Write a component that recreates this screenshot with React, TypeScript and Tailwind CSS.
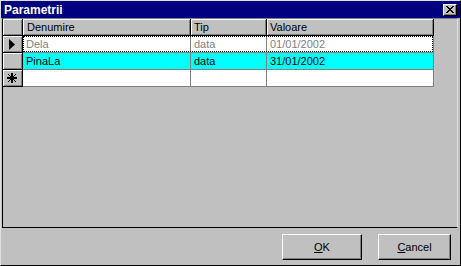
import React from "react";

const fixedCell =
  "bg-[#c0c0c0] border-r border-b border-r-black border-b-black shadow-[inset_1px_1px_#ffffff,inset_-1px_-1px_#808080]";
const dataCell = "border-r border-b border-[#808080] px-[3px] flex items-center whitespace-nowrap overflow-hidden";

function Triangle() {
  return (
    <svg width="6" height="11" viewBox="0 0 6 11">
      <path d="M0 0 L6 5.5 L0 11 Z" fill="#000" />
    </svg>
  );
}

function Star() {
  return (
    <svg width="10" height="10" viewBox="0 0 10 10" shapeRendering="crispEdges">
      <path d="M5 0 V10 M0 5 H10 M1 1 L9 9 M9 1 L1 9" stroke="#000" strokeWidth="1.2" />
    </svg>
  );
}

export default function App() {
  return (
    <div className="w-[461px] h-[266px] bg-[#c0c0c0] border border-t-[#dfdfdf] border-l-[#dfdfdf] border-r-black border-b-black flex flex-col font-['Liberation_Sans',Arial,sans-serif] text-[11px] text-black select-none">
      {/* title bar */}
      <div className="h-[17px] bg-[#000080] flex items-center justify-between pl-[3px] pr-[3px]">
        <span className="text-white font-bold text-[12px] leading-none">Parametrii</span>
        <div className="w-[14px] h-[12px] bg-[#c0c0c0] border border-t-white border-l-white border-r-black border-b-black shadow-[inset_-1px_-1px_#808080] flex items-center justify-center">
          <svg width="8" height="7" viewBox="0 0 8 7" shapeRendering="crispEdges">
            <path d="M0 0h2v1h-2z M6 0h2v1h-2z M1 1h2v1h-2z M5 1h2v1h-2z M2 2h4v1h-4z M3 3h2v1h-2z M2 4h4v1h-4z M1 5h2v1h-2z M5 5h2v1h-2z M0 6h2v1h-2z M6 6h2v1h-2z" fill="#000" />
          </svg>
        </div>
      </div>

      {/* grid */}
      <div className="ml-[1px] w-[456px] h-[210px] border border-l-black border-b-black border-t-[#808080] border-r-[#dfdfdf] flex flex-col">
        {/* header */}
        <div className="flex h-[17px]">
          <div className={`w-[20px] ${fixedCell}`} />
          <div className={`w-[168px] ${fixedCell} px-[4px] flex items-center`}>Denumire</div>
          <div className={`w-[76px] ${fixedCell} px-[3px] flex items-center`}>Tip</div>
          <div className={`w-[167px] ${fixedCell} px-[3px] flex items-center`}>Valoare</div>
        </div>
        {/* row 1 */}
        <div className="flex h-[17px]">
          <div className={`w-[20px] ${fixedCell} flex items-center justify-center pr-[2px]`}>
            <Triangle />
          </div>
          <div className="relative flex bg-white text-[#808080]">
            <div className={`w-[168px] ${dataCell}`}>Dela</div>
            <div className={`w-[76px] ${dataCell}`}>data</div>
            <div className={`w-[167px] ${dataCell}`}>01/01/2002</div>
            <div className="absolute left-0 top-0 w-[410px] h-[16px] border border-dotted border-black" />
          </div>
        </div>
        {/* row 2 */}
        <div className="flex h-[17px]">
          <div className={`w-[20px] ${fixedCell}`} />
          <div className="flex bg-[#00ffff]">
            <div className={`w-[168px] ${dataCell}`}>PinaLa</div>
            <div className={`w-[76px] ${dataCell}`}>data</div>
            <div className={`w-[167px] ${dataCell}`}>31/01/2002</div>
          </div>
        </div>
        {/* row 3 */}
        <div className="flex h-[17px]">
          <div className={`w-[20px] ${fixedCell} flex items-center justify-center pr-[1px]`}>
            <Star />
          </div>
          <div className="flex bg-white">
            <div className={`w-[168px] ${dataCell}`} />
            <div className={`w-[76px] ${dataCell}`} />
            <div className={`w-[167px] ${dataCell}`} />
          </div>
        </div>
      </div>

      {/* buttons */}
      <div className="mt-[6px] flex justify-end gap-[16px] pr-[9px]">
        <button className="w-[80px] h-[26px] bg-[#c0c0c0] border border-t-white border-l-white border-r-black border-b-black shadow-[inset_-1px_-1px_#808080] flex items-center justify-center">
          <span>
            <span className="underline underline-offset-[1px]">O</span>K
          </span>
        </button>
        <button className="w-[73px] h-[26px] bg-[#c0c0c0] border border-t-white border-l-white border-r-black border-b-black shadow-[inset_-1px_-1px_#808080] flex items-center justify-center">
          <span>
            <span className="underline underline-offset-[1px]">C</span>ancel
          </span>
        </button>
      </div>
    </div>
  );
}
